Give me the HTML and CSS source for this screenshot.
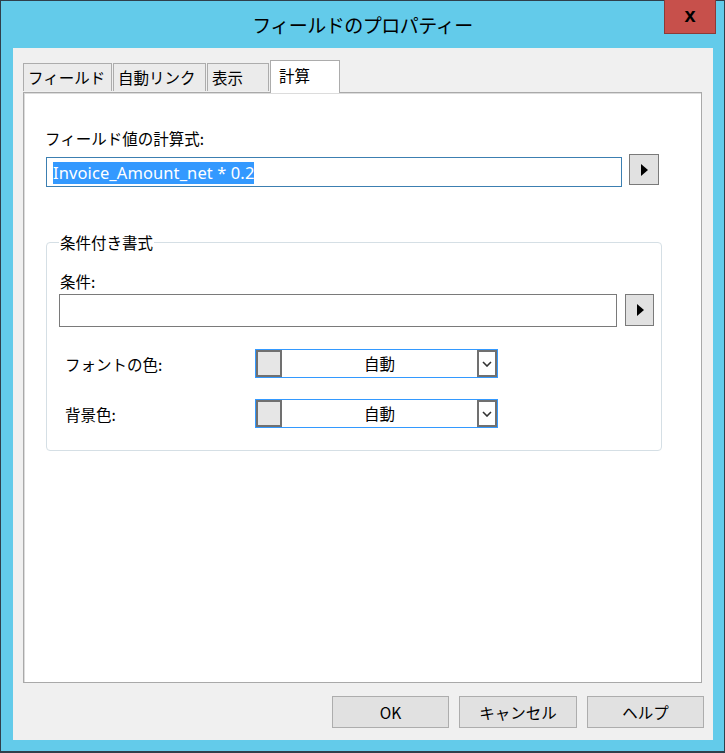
FILE: index.html
```html
<!DOCTYPE html>
<html>
<head>
	<meta charset="utf-8">
	<title>フィールドのプロパティー</title>
	<link rel="stylesheet" href="styles.css">
</head>
<body>
	<div class="window">
		<div class="titlebar">
			<span class="title">フィールドのプロパティー</span>
			<div class="close">x</div>
		</div>

		<div class="client">
			<div class="tabs">
				<div class="tab">フィールド</div>
				<div class="tab">自動リンク</div>
				<div class="tab">表示</div>
				<div class="tab active">計算</div>
			</div>

			<div class="panel">
				<div class="caption">フィールド値の計算式:</div>
				<div class="expr-row">
					<div class="textbox focused"><span class="sel">Invoice_Amount_net * 0.2</span></div>
					<div class="arrow-btn">
						<svg width="8" height="12" viewBox="0 0 8 12"><path d="M1 0 L8 6 L1 12 Z" fill="#000"/></svg>
					</div>
				</div>

				<fieldset class="group">
					<legend>条件付き書式</legend>
					<div class="caption small">条件:</div>
					<div class="expr-row cond">
						<div class="textbox plain"></div>
						<div class="arrow-btn">
							<svg width="8" height="12" viewBox="0 0 8 12"><path d="M1 0 L8 6 L1 12 Z" fill="#000"/></svg>
						</div>
					</div>

					<div class="color-row">
						<span class="color-label">フォントの色:</span>
						<div class="combo">
							<span class="swatch"></span>
							<span class="combo-text">自動</span>
							<span class="drop">
								<svg width="10" height="6" viewBox="0 0 10 6"><path d="M1 1 L5 5 L9 1" fill="none" stroke="#333" stroke-width="1.6"/></svg>
							</span>
						</div>
					</div>
					<div class="color-row">
						<span class="color-label">背景色:</span>
						<div class="combo">
							<span class="swatch"></span>
							<span class="combo-text">自動</span>
							<span class="drop">
								<svg width="10" height="6" viewBox="0 0 10 6"><path d="M1 1 L5 5 L9 1" fill="none" stroke="#333" stroke-width="1.6"/></svg>
							</span>
						</div>
					</div>
				</fieldset>
			</div>

			<div class="buttons">
				<div class="btn">OK</div>
				<div class="btn">キャンセル</div>
				<div class="btn">ヘルプ</div>
			</div>
		</div>
	</div>
</body>
</html>
```

FILE: styles.css
```css
body {
	margin: 0;
	font-family: "Noto Sans CJK JP", "Noto Sans", sans-serif;
	color: #000;
}

.window {
	width: 725px;
	height: 753px;
	box-sizing: border-box;
	background: #63cbea;
	border: 1px solid #2f3f4b;
	border-bottom-width: 2px;
	position: relative;
	display: flex;
	flex-direction: column;
}

.titlebar {
	height: 47px;
	display: flex;
	align-items: center;
	justify-content: center;
}

.title {
	font-size: 19px;
	letter-spacing: -0.5px;
	margin-top: 0;
}

.close {
	position: absolute;
	top: -1px;
	right: 8px;
	width: 52px;
	height: 34px;
	box-sizing: border-box;
	background: #c7504b;
	border: 1px solid #8c3a37;
	border-top: none;
	color: #000;
	font-family: "Liberation Sans", sans-serif;
	font-weight: bold;
	font-size: 20px;
	line-height: 30px;
	text-align: center;
}

.client {
	flex: 1;
	margin: 0 11px 11px 12px;
	background: #f0f0f0;
	padding: 12px 11px 0 10px;
	display: flex;
	flex-direction: column;
}

.tabs {
	display: flex;
	height: 32px;
	align-items: flex-end;
	position: relative;
	z-index: 1;
}

.tab {
	height: 28px;
	box-sizing: border-box;
	padding: 0 4px;
	border: 1px solid #acacac;
	border-bottom: none;
	background: #ebebeb;
	font-size: 15.5px;
	line-height: 27px;
	margin-right: 1px;
	margin-bottom: 1px;
}

.tab:first-child {
	width: 89px;
}

.tab:nth-child(2) {
	width: 93px;
}

.tab:nth-child(3) {
	width: 62px;
}

.tab.active {
	width: 70px;
	height: 33px;
	margin-bottom: -1px;
	background: #fff;
	padding: 0 8px;
	line-height: 28px;
}

.panel {
	height: 591px;
	box-sizing: border-box;
	background: #fff;
	border: 1px solid #a9a9a9;
	box-shadow: inset 1px 1px 0 #dcdcdc;
	padding: 35px 22px 0 21px;
}

.caption {
	font-size: 15.5px;
	line-height: 20px;
}

.expr-row {
	display: flex;
	align-items: center;
	margin-top: 9px;
}

.textbox {
	width: 576px;
	height: 30px;
	box-sizing: border-box;
	background: #fff;
	padding: 2px 6px;
}

.textbox.focused {
	margin-left: 1px;
	border: 1px solid #3c7fb1;
}

.sel {
	background: #3399ff;
	color: #fff;
	font-family: "Noto Sans", "Liberation Sans", sans-serif;
	font-size: 16.5px;
	line-height: 22px;
	display: inline-block;
	letter-spacing: 0.1px;
}

.arrow-btn {
	width: 30px;
	height: 31px;
	box-sizing: border-box;
	margin-left: 7px;
	margin-top: -5px;
	background: #e1e1e1;
	border: 1px solid #7a7a7a;
	display: flex;
	align-items: center;
	justify-content: center;
}

.group {
	width: 616px;
	min-width: 0;
	box-sizing: border-box;
	margin: 45px 0 0 1px;
	padding: 0 7px 22px 13px;
	border: 1px solid #d5dfe5;
	border-radius: 4px;
}

.group legend {
	font-size: 15.5px;
	line-height: 20px;
	padding: 0 1px;
	margin-left: -1px;
}

.caption.small {
	margin-top: 19px;
}

.expr-row.cond {
	margin-top: 3px;
	margin-left: -1px;
}

.textbox.plain {
	width: 558px;
	height: 33px;
	flex-shrink: 0;
	border: 1px solid #7a7a7a;
}

.cond .arrow-btn {
	margin-left: 8px;
	margin-top: -1px;
	width: 29px;
	height: 32px;
	flex-shrink: 0;
}

.color-row {
	display: flex;
	align-items: center;
	margin-top: 22px;
	margin-left: 5px;
}

.color-row + .color-row {
	margin-top: 21px;
}

.color-label {
	width: 190px;
	font-size: 15.5px;
}

.combo {
	width: 243px;
	height: 29px;
	box-sizing: border-box;
	border: 1px solid #3399ff;
	display: flex;
	background: #fff;
}

.swatch {
	width: 26px;
	box-sizing: border-box;
	background: #e6e6e6;
	border: 2px solid #707070;
	border-right-width: 2px;
}

.combo-text {
	flex: 1;
	text-align: center;
	font-size: 15.5px;
	line-height: 26px;
}

.drop {
	width: 20px;
	box-sizing: border-box;
	border: 2px solid #707070;
	display: flex;
	align-items: center;
	justify-content: center;
}

.buttons {
	display: flex;
	justify-content: flex-end;
	gap: 10px;
	margin-top: 13px;
	margin-right: -2px;
}

.btn {
	width: 117px;
	height: 32px;
	box-sizing: border-box;
	background: #e1e1e1;
	border: 1px solid #adadad;
	text-align: center;
	font-size: 15.5px;
	line-height: 30px;
}

.btn:nth-child(2) {
	width: 118px;
}
```
